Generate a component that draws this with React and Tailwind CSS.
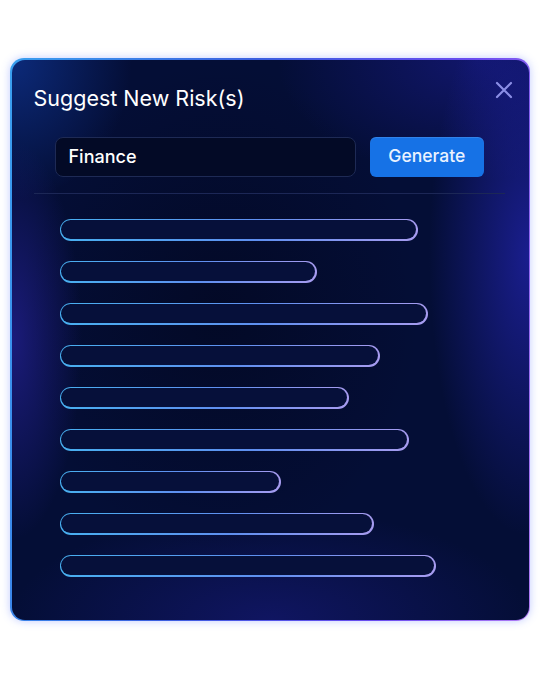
import React from "react";

const bars = [358, 257, 368, 320, 289, 349, 221, 314, 376];

export default function App() {
  return (
    <div className="min-h-[675px] w-[540px] bg-white pt-[58px] pl-[10px]" style={{ fontFamily: "Inter, 'Noto Sans', sans-serif" }}>
      <div className="w-[520px] h-[563px] rounded-[14px] p-[1.5px] bg-[linear-gradient(100deg,#3aa0f0_0%,#3b5fe0_40%,#6a4cf0_75%,#b07cf5_100%)] shadow-[0_0_8px_rgba(80,110,255,0.35)]">
        <div className="relative h-full w-full rounded-[13px] overflow-hidden bg-[#040e36] bg-[radial-gradient(ellipse_100px_280px_at_100%_35%,rgba(40,40,200,0.6),transparent),radial-gradient(ellipse_70px_200px_at_0%_50%,rgba(50,40,190,0.5),transparent),radial-gradient(ellipse_260px_110px_at_50%_100%,rgba(30,30,150,0.45),transparent),radial-gradient(ellipse_200px_120px_at_90%_0%,rgba(30,30,160,0.5),transparent),radial-gradient(ellipse_120px_140px_at_0%_0%,rgba(20,70,190,0.5),transparent),radial-gradient(ellipse_200px_250px_at_40%_45%,rgba(2,6,28,0.6),transparent)]">
          <div className="flex flex-col pl-[22px] pr-[24px] pt-[24px]">
            <div className="flex items-start justify-between">
              <h1 className="text-[21.5px] leading-[28px] text-white font-normal">Suggest New Risk(s)</h1>
              <button className="mt-[-3px] mr-[-8px] text-[#8b8fe6]">
                <svg width="18" height="18" viewBox="0 0 18 18" fill="none" stroke="currentColor" strokeWidth="2.2" strokeLinecap="round">
                  <path d="M2 2L16 16M16 2L2 16" />
                </svg>
              </button>
            </div>
            <div className="mt-[25px] flex gap-[14px] px-[21px]">
              <div className="h-[40px] w-[303px] rounded-[8px] border border-[#1e2a55] bg-[#030a26] flex items-center px-[13px]">
                <span className="text-[18px] font-medium text-white">Finance</span>
              </div>
              <button className="h-[40px] w-[114px] rounded-[6px] bg-[#1672e6] text-[17.5px] font-medium text-[#eaf2ff] shadow-[inset_0_1px_0_rgba(255,255,255,0.12)]">
                Generate
              </button>
            </div>
            <div className="mt-[16px] h-px bg-[#1c2756]" />
            <div className="mt-[25px] flex flex-col gap-[20px] pl-[26px]">
              {bars.map((w, i) => (
                <div
                  key={i}
                  className="h-[22px] rounded-full p-[1.6px] bg-[linear-gradient(90deg,#48b0f0,#5f8ff0_55%,#a79cf0)]"
                  style={{ width: w }}
                >
                  <div className="h-full w-full rounded-full bg-[#06103a]" />
                </div>
              ))}
            </div>
          </div>
        </div>
      </div>
    </div>
  );
}
